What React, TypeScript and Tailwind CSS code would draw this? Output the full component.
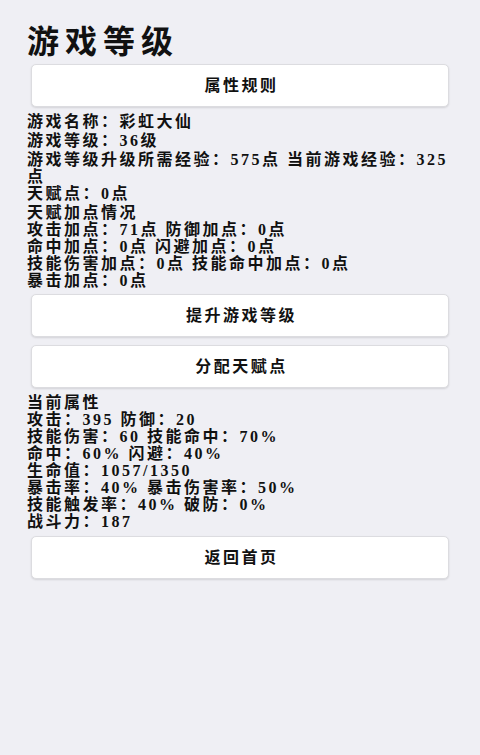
import React from 'react'

const font = { fontFamily: '"Liberation Serif", "Noto Sans CJK SC", serif' }

function ActionButton({ label }: { label: string }) {
  return (
    <button
      type="button"
      className="mx-[4px] flex h-[43px] items-center justify-center rounded-[5px] border border-[#dcdce0] bg-white pl-[3px] text-[16px] font-bold tracking-[2.5px] text-[#111] shadow-[0_1px_2px_rgba(0,0,0,0.12)]"
    >
      {label}
    </button>
  )
}

export default function App() {
  return (
    <div
      style={font}
      className="min-h-[755px] w-full bg-[#efeff4] px-[27px] pt-[22px] text-[#111]"
    >
      <h1 className="text-[32px] font-bold leading-[40px] tracking-[6px]">游戏等级</h1>

      <div className="mt-[2px] flex flex-col">
        <ActionButton label="属性规则" />
      </div>

      {/* 基本信息 */}
      <div className="mt-[6px] text-[16px] font-bold leading-[17px] tracking-[2.5px]">
        <p className="mb-[2px]">游戏名称：彩虹大仙</p>
        <p className="mb-[2px]">游戏等级：36级</p>
        <p>游戏等级升级所需经验：575点 当前游戏经验：325点</p>
        <p className="mb-[2px]">天赋点：0点</p>
        <div>
          <p>天赋加点情况</p>
          <p>攻击加点：71点 防御加点：0点</p>
          <p>命中加点：0点 闪避加点：0点</p>
          <p>技能伤害加点：0点 技能命中加点：0点</p>
          <p>暴击加点：0点</p>
        </div>
      </div>

      <div className="mt-[5px] flex flex-col gap-[8px]">
        <ActionButton label="提升游戏等级" />
        <ActionButton label="分配天赋点" />
      </div>

      {/* 当前属性 */}
      <div className="mt-[6px] text-[16px] font-bold leading-[17px] tracking-[2.5px]">
        <p>当前属性</p>
        <p>攻击：395 防御：20</p>
        <p>技能伤害：60 技能命中：70%</p>
        <p>命中：60% 闪避：40%</p>
        <p>生命值：1057/1350</p>
        <p>暴击率：40% 暴击伤害率：50%</p>
        <p>技能触发率：40% 破防：0%</p>
        <p>战斗力：187</p>
      </div>

      <div className="mt-[6px] flex flex-col">
        <ActionButton label="返回首页" />
      </div>
    </div>
  )
}
